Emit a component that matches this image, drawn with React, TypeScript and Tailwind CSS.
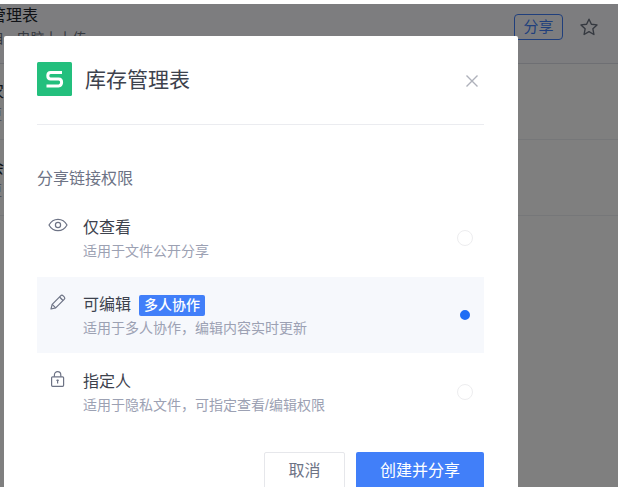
import React, { useState } from 'react';

interface Permission {
  id: string;
  title: string;
  description: string;
  badge?: string;
  icon: React.ReactNode;
}

function EyeIcon() {
  return (
    <svg width="20" height="16" viewBox="0 0 20 16" fill="none" stroke="currentColor" strokeWidth="1.2">
      <path d="M1 8C3 4.300 6.200 2.300 10 2.300S17 4.300 19 8C17 11.700 13.800 13.700 10 13.700S3 11.700 1 8Z" />
      <circle cx="10" cy="8" r="2.600" />
    </svg>
  );
}

function PencilIcon() {
  return (
    <svg width="20" height="16" viewBox="0 0 20 16" fill="none" stroke="currentColor" strokeWidth="1.2" strokeLinejoin="round">
      <path d="M3 15L4.200 10.400L12.600 1.800C13.400 1 14.400 1 15.200 1.800L16.200 2.800C17 3.600 17 4.600 16.200 5.400L7.700 13.900Z" />
      <path d="M11.600 3L15 6.500M4.200 10.400L7.700 13.900" />
    </svg>
  );
}

function LockIcon() {
  return (
    <svg width="20" height="16" viewBox="0 0 20 16" fill="none" stroke="currentColor" strokeWidth="1.2">
      <rect x="3.600" y="5.800" width="12" height="9.500" rx="1" />
      <path d="M6.400 5.800V4C6.400 1.900 7.700 .7 9.600 .7S12.800 1.900 12.800 4V5.800M9.600 8.600V12.600M8.400 9.300H10.800" />
    </svg>
  );
}

const permissions: Permission[] = [
  { id: 'view', title: '仅查看', description: '适用于文件公开分享', icon: <EyeIcon /> },
  {
    id: 'edit',
    title: '可编辑',
    description: '适用于多人协作，编辑内容实时更新',
    badge: '多人协作',
    icon: <PencilIcon />,
  },
  { id: 'assign', title: '指定人', description: '适用于隐私文件，可指定查看/编辑权限', icon: <LockIcon /> },
];

function FileRow({ name, source }: { name: string; source: string }) {
  return (
    <div className="h-[76px] overflow-hidden border-b border-[#eceef2] pt-4">
      <div className="-ml-[12px]">
        <p className="text-base leading-6 text-[#20242c]">{name}</p>
        <p className="text-sm leading-5 text-[#9ca1b3]">{source}</p>
      </div>
    </div>
  );
}

function FileList() {
  return (
    <div className="h-full bg-white">
      <header className="flex h-[60px] items-start justify-between overflow-hidden border-b border-[#dcdfe6] bg-[#fafbff] pr-5">
        <div className="-ml-[10px] whitespace-nowrap">
          <h1 className="text-base leading-6 text-[#20242c]">管理表</h1>
          <p className="text-sm leading-5 text-[#6b7280]">自 · 电脑上上传</p>
        </div>
        <div className="flex items-center gap-[17px] pt-[10px]">
          <button
            type="button"
            className="h-[26px] w-[49px] rounded-sm border border-[#417ff9] text-[15px] leading-6 text-[#417ff9]"
          >
            分享
          </button>
          <button type="button" aria-label="收藏" className="text-[#6b7280]">
            <svg width="18" height="18" viewBox="0 0 18 18" fill="none" stroke="currentColor" strokeWidth="1.4" strokeLinejoin="round">
              <path d="M9 1.200L11.400 6.200L17 6.900L12.900 10.800L13.900 16.500L9 13.700L4.100 16.500L5.100 10.800L1 6.900L6.600 6.200Z" />
            </svg>
          </button>
        </div>
      </header>
      <FileRow name="农" source="更" />
      <FileRow name="会" source="更" />
    </div>
  );
}

function PermissionRow({
  permission,
  checked,
  onSelect,
}: {
  permission: Permission;
  checked: boolean;
  onSelect: () => void;
}) {
  return (
    <label className={`flex h-[76px] cursor-pointer px-[11px] ${checked ? 'bg-[#f6f8fc]' : ''}`}>
      <span className="pt-[17px] text-[#6d7385]">{permission.icon}</span>
      <span className="ml-[15px] flex-1 pt-4">
        <span className="flex items-center gap-2 text-base leading-6 text-[#3d424d]">
          {permission.title}
          {permission.badge && (
            <span className="rounded-xs bg-[#417ff9] px-[5px] text-sm leading-[21px] font-medium text-white">
              {permission.badge}
            </span>
          )}
        </span>
        <span className="block text-sm leading-[22px] whitespace-nowrap text-[#9ca1b3]">{permission.description}</span>
      </span>
      <input
        type="radio"
        name="permission"
        checked={checked}
        onChange={onSelect}
        className="size-4 appearance-none self-center rounded-full border border-[#ededef] bg-white checked:border-[3px] checked:border-[#f6f8fc] checked:bg-[#1d6df5]"
      />
    </label>
  );
}

export default function App() {
  const [selected, setSelected] = useState('edit');

  return (
    <div className="relative h-screen overflow-hidden bg-white pt-1 font-['Liberation_Sans','Noto_Sans_CJK_SC',sans-serif]">
      <FileList />
      <div className="absolute inset-x-0 top-1 bottom-0 bg-black/50 pt-8 pr-[100px] pl-1">
        <section
          role="dialog"
          aria-labelledby="share-title"
          className="rounded-t-xs bg-white pt-[25px] pr-[34px] pb-8 pl-[33px]"
        >
          <header className="flex items-center border-b border-[#ebecf0] pb-[27px]">
            <svg width="35" height="34" viewBox="0 0 35 34" fill="none">
              <rect width="35" height="34" rx="1.5" fill="#23bf7d" />
              <path
                d="M25 10.500H13.600C11.800 10.500 10.800 11.800 10.800 13.700S11.800 16.900 13.600 16.900H21.600C23.600 16.900 24.600 18.200 24.600 20.300S23.600 23.900 21.600 23.900H9.500"
                stroke="white"
                strokeWidth="3"
              />
            </svg>
            <h2 id="share-title" className="ml-[13px] flex-1 pt-0.5 text-[21px] leading-[34px] text-[#3d424d]">
              库存管理表
            </h2>
            <button type="button" aria-label="关闭" className="mr-[5px] pt-1 text-[#aeb1ba]">
              <svg width="14" height="14" viewBox="0 0 14 14" stroke="currentColor" strokeWidth="1.4">
                <path d="M1.500 1.500L12.500 12.500M12.500 1.500L1.500 12.500" />
              </svg>
            </button>
          </header>
          <fieldset>
            <legend className="pt-[42px] text-base leading-6 text-[#6d7385]">分享链接权限</legend>
            <div className="flex flex-col gap-px pt-[9px]">
              {permissions.map((permission) => (
                <PermissionRow
                  key={permission.id}
                  permission={permission}
                  checked={selected === permission.id}
                  onSelect={() => setSelected(permission.id)}
                />
              ))}
            </div>
          </fieldset>
          <footer className="flex justify-end gap-[11px] pt-[22px]">
            <button
              type="button"
              className="h-[38px] w-[81px] rounded-xs border border-[#e6e7eb] text-base text-[#6d7385]"
            >
              取消
            </button>
            <button type="button" className="h-[38px] w-32 rounded-xs bg-[#417ff9] text-base text-white">
              创建并分享
            </button>
          </footer>
        </section>
      </div>
    </div>
  );
}
